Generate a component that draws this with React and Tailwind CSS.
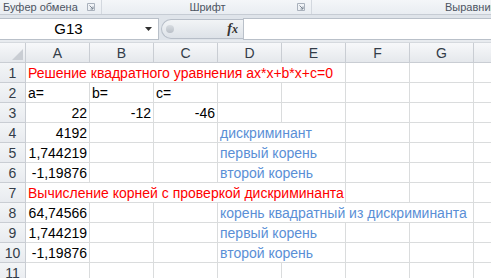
import React from "react";

const RED = "text-[#ff0000]";
const BLUE = "text-[#5a8fd6]";

const rows = [
  [{ span: 5, t: "Решение квадратного уравнения ax*x+b*x+c=0", c: RED }, {}, {}, {}],
  [{ t: "a=" }, { t: "b=" }, { t: "c=" }, {}, {}, {}, {}, {}],
  [{ t: "22", r: true }, { t: "-12", r: true }, { t: "-46", r: true }, {}, {}, {}, {}, {}],
  [{ t: "4192", r: true }, {}, {}, { span: 2, t: "дискриминант", c: BLUE }, {}, {}, {}],
  [{ t: "1,744219", r: true }, {}, {}, { span: 2, t: "первый корень", c: BLUE }, {}, {}, {}],
  [{ t: "-1,19876", r: true }, {}, {}, { span: 2, t: "второй корень", c: BLUE }, {}, {}, {}],
  [{ span: 5, t: "Вычисление корней с проверкой дискриминанта", c: RED }, {}, {}, {}],
  [{ t: "64,74566", r: true }, {}, {}, { span: 4, t: "корень квадратный из дискриминанта", c: BLUE }, {}],
  [{ t: "1,744219", r: true }, {}, {}, { span: 2, t: "первый корень", c: BLUE }, {}, {}, {}],
  [{ t: "-1,19876", r: true }, {}, {}, { span: 2, t: "второй корень", c: BLUE }, {}, {}, {}],
  [{}, {}, {}, {}, {}, {}, {}, {}],
];

const spanCls = { 1: "", 2: "col-span-2", 4: "col-span-4", 5: "col-span-5" };

function Launcher() {
  return (
    <svg width="8" height="8" viewBox="0 0 8 8" className="shrink-0">
      <path d="M0.5 0.5 H7.5 V7.5 H0.5 Z" fill="none" stroke="#a9b1bc" />
      <path d="M2.5 2.5 L6 6 M6 3.5 V6 H3.5" fill="none" stroke="#7d8794" />
    </svg>
  );
}

export default function App() {
  return (
    <div className="w-[491px] h-[278px] overflow-hidden bg-white font-['Liberation_Sans',sans-serif] select-none">
      {/* ribbon group labels */}
      <div className="h-[15px] flex bg-gradient-to-b from-[#f4f6f9] to-[#e9edf2] border-b border-[#c6ccd4] text-[11px] leading-[14px] text-[#4c5462] whitespace-nowrap">
        <div className="w-[102px] shrink-0 flex items-start pl-[3px] pr-[6px] border-r border-[#d3d8df]">
          <span className="flex-1">Буфер обмена</span>
          <div className="mt-[3px]"><Launcher /></div>
        </div>
        <div className="w-[210px] shrink-0 flex items-start border-r border-[#d3d8df] pr-[6px]">
          <span className="flex-1 text-center pl-[16px]">Шрифт</span>
          <div className="mt-[3px]"><Launcher /></div>
        </div>
        <div className="flex-1 overflow-hidden pl-[133px]">Выравнивание</div>
      </div>
      <div className="h-[3px] bg-[#dfe4ea]" />
      {/* formula bar */}
      <div className="h-[22px] flex bg-[#dfe4ea]">
        <div className="w-[159px] bg-white border-t border-b border-r border-[#b9c0c9] flex items-center relative">
          <span className="flex-1 text-center text-[15px] text-black pr-[8px]">G13</span>
          <svg width="7" height="4" viewBox="0 0 7 4" className="mr-[6px]">
            <path d="M0 0 H7 L3.5 4 Z" fill="#303030" />
          </svg>
        </div>
        <div className="w-[84px] flex items-center pl-[2px]">
          <div className="h-[20px] flex-1 flex items-center rounded-l-full bg-gradient-to-b from-[#f2f4f6] to-[#dde2e8] border border-[#b7bec8] border-r-0">
            <div className="ml-[4px] w-[8px] h-[8px] rounded-full bg-gradient-to-b from-[#d8dce1] to-[#b9bfc7]" />
            <div className="flex-1" />
            <span className="font-['Liberation_Serif',serif] italic font-bold text-[14px] leading-none text-[#333] mr-[5px]">f<span className="text-[12px]">x</span></span>
          </div>
        </div>
        <div className="flex-1 bg-white border-t border-b border-l border-[#b9c0c9]" />
      </div>
      <div className="h-[3px] bg-[#e8ebef] border-b border-[#d5d9de]" />
      {/* grid */}
      <div className="grid grid-cols-[26px_repeat(8,64px)] text-[14px] leading-none">
        <div className="h-[20px] bg-gradient-to-b from-[#f7f8fa] to-[#e5e8ec] border-r border-b border-[#c9cdd3] flex items-end justify-end p-[2px]">
          <svg width="11" height="11" viewBox="0 0 11 11">
            <path d="M11 0 V11 H0 Z" fill="#c9cdd3" />
          </svg>
        </div>
        {["A", "B", "C", "D", "E", "F", "G", ""].map((l, k) => (
          <div key={k} className="h-[20px] bg-gradient-to-b from-[#f7f8fa] to-[#e5e8ec] border-r border-b border-[#c9cdd3] flex items-center justify-center text-[#333c48]">
            {l}
          </div>
        ))}
        {rows.map((row, i) => (
          <React.Fragment key={i}>
            <div className="h-[20px] bg-gradient-to-b from-[#f3f5f7] to-[#e8ebef] border-r border-b border-[#c9cdd3] flex items-center justify-center text-[#333c48]">
              {i + 1}
            </div>
            {row.map((c, j) => (
              <div
                key={j}
                className={`h-[20px] border-r border-b border-[#dadcdd] flex items-center px-[2px] whitespace-nowrap overflow-hidden ${spanCls[c.span || 1]} ${c.r ? "justify-end" : "justify-start"} ${c.c || "text-black"}`}
              >
                {c.t || ""}
              </div>
            ))}
          </React.Fragment>
        ))}
      </div>
    </div>
  );
}
